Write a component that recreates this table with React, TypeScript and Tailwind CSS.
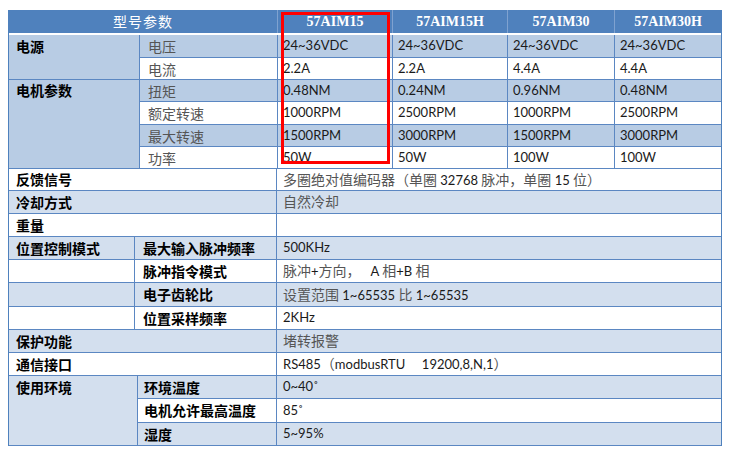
import React from "react";

const LINE = "border-[#5b87c2]";

function Mixed({ text }: { text: string }) {
  const parts = text.split(/([\u3000-\u303f\u4e00-\u9fff\uff00-\uffef]+)/);
  return (
    <span className="whitespace-pre">
      {parts.map((p, i) =>
        /[\u3000-\u303f\u4e00-\u9fff\uff00-\uffef]/.test(p) ? (
          <span key={i} className="text-[#555555] text-[14px]">
            {p}
          </span>
        ) : (
          <span key={i} className="text-[#1a1a1a]">
            {p}
          </span>
        )
      )}
    </span>
  );
}

const BLUE = "bg-[#b8cce4]";
const LIGHT = "bg-[#d3dfee]";
const WHITE = "bg-white";

type UpperRow = { label: string; vals: string[]; h: string; bg: string };

function UpperGroup({ title, rows, h }: { title: string; rows: UpperRow[]; h: string }) {
  return (
    <div className={`flex ${h}`}>
      <div className={`w-[130px] shrink-0 ${BLUE} border-b ${LINE}`}>
        <div className={`${rows[0].h} flex items-center pl-[7px] pb-px font-bold text-black text-[14px]`}>{title}</div>
      </div>
      <div className="flex flex-col flex-1">
        {rows.map((r, i) => (
          <div key={i} className={`flex ${r.h} ${r.bg} border-b ${LINE}`}>
            <div className={`w-[138px] shrink-0 border-l ${LINE} flex items-center pl-[8px]`}>
              <Mixed text={r.label} />
            </div>
            {r.vals.map((v, j) => (
              <div
                key={j}
                className={`${j < 2 ? "w-[115px]" : "w-[107px]"} shrink-0 border-l ${LINE} flex items-center pl-[5px] text-[13px]`}
              >
                <Mixed text={v} />
              </div>
            ))}
          </div>
        ))}
      </div>
    </div>
  );
}

function WideRow({ label, value, h, bg }: { label: string; value: string; h: string; bg: string }) {
  return (
    <div className={`flex ${h} ${bg} border-b ${LINE}`}>
      <div className="w-[267px] shrink-0 flex items-center pl-[7px] font-bold text-black text-[14px]">{label}</div>
      <div className={`w-[445px] shrink-0 border-l ${LINE} flex items-center pl-[6px] text-[13px]`}>
        <Mixed text={value} />
      </div>
    </div>
  );
}

function SplitRow({
  a,
  b,
  value,
  h,
  bg,
}: {
  a: string;
  b: string;
  value: string;
  h: string;
  bg: string;
}) {
  return (
    <div className={`flex ${h} ${bg} border-b ${LINE}`}>
      <div className="w-[125px] shrink-0 flex items-center pl-[7px] font-bold text-black text-[14px]">{a}</div>
      <div className={`w-[142px] shrink-0 border-l ${LINE} flex items-center pl-[8px] font-bold text-black text-[14px]`}>{b}</div>
      <div className={`w-[445px] shrink-0 border-l ${LINE} flex items-center pl-[6px] text-[13px]`}>
        <Mixed text={value} />
      </div>
    </div>
  );
}

export default function App() {
  const envRows = [
    { b: "环境温度", v: "0~40˚", h: "h-[23px]", bg: LIGHT },
    { b: "电机允许最高温度", v: "85˚", h: "h-[24px]", bg: WHITE },
    { b: "湿度", v: "5~95%", h: "h-[23px]", bg: LIGHT },
  ];
  return (
    <div
      className="w-[729px] h-[452px] bg-white pt-[10px] pl-[8px] relative overflow-hidden"
      style={{ fontFamily: "Lato, 'Noto Sans CJK SC', sans-serif" }}
    >
      <div className={`w-[714px] border-l border-r border-[#4f81bd]`}>
        {/* header */}
        <div className="flex h-[25px] bg-[#4f81bd] border-b-2 border-white text-white">
          <div className="w-[268px] shrink-0 flex items-center justify-center text-[14px] tracking-[1px]">型号参数</div>
          {["57AIM15", "57AIM15H", "57AIM30", "57AIM30H"].map((m, i) => (
            <div
              key={m}
              className={`${i < 2 ? "w-[115px]" : "w-[107px]"} shrink-0 border-l border-[#7fa2d0] flex items-center justify-center font-bold text-[14px]`}
              style={{ fontFamily: "'Liberation Serif', serif" }}
            >
              {m}
            </div>
          ))}
        </div>

        <UpperGroup
          title="电源"
          h="h-[45px]"
          rows={[
            { label: "电压", vals: ["24~36VDC", "24~36VDC", "24~36VDC", "24~36VDC"], h: "h-[23px]", bg: BLUE },
            { label: "电流", vals: ["2.2A", "2.2A", "4.4A", "4.4A"], h: "h-[22px]", bg: WHITE },
          ]}
        />
        <UpperGroup
          title="电机参数"
          h="h-[89px]"
          rows={[
            { label: "扭矩", vals: ["0.48NM", "0.24NM", "0.96NM", "0.48NM"], h: "h-[22px]", bg: BLUE },
            { label: "额定转速", vals: ["1000RPM", "2500RPM", "1000RPM", "2500RPM"], h: "h-[23px]", bg: WHITE },
            { label: "最大转速", vals: ["1500RPM", "3000RPM", "1500RPM", "3000RPM"], h: "h-[22px]", bg: BLUE },
            { label: "功率", vals: ["50W", "50W", "100W", "100W"], h: "h-[22px]", bg: WHITE },
          ]}
        />

        <WideRow label="反馈信号" value="多圈绝对值编码器（单圈 32768 脉冲，单圈 15 位）" h="h-[22px]" bg={WHITE} />
        <WideRow label="冷却方式" value="自然冷却" h="h-[23px]" bg={LIGHT} />
        <WideRow label="重量" value="" h="h-[23px]" bg={WHITE} />

        <SplitRow a="位置控制模式" b="最大输入脉冲频率" value="500KHz" h="h-[23px]" bg={LIGHT} />
        <SplitRow a="" b="脉冲指令模式" value="脉冲+方向，   A 相+B 相" h="h-[23px]" bg={WHITE} />
        <SplitRow a="" b="电子齿轮比" value="设置范围 1~65535 比 1~65535" h="h-[24px]" bg={LIGHT} />
        <SplitRow a="" b="位置采样频率" value="2KHz" h="h-[23px]" bg={WHITE} />

        <WideRow label="保护功能" value="堵转报警" h="h-[23px]" bg={LIGHT} />
        <WideRow label="通信接口" value="RS485（modbusRTU     19200,8,N,1）" h="h-[23px]" bg={WHITE} />

        <div className="flex h-[70px]">
          <div className={`w-[128px] shrink-0 ${LIGHT} border-b ${LINE}`}>
            <div className="h-[23px] flex items-center pl-[7px] font-bold text-black text-[14px]">使用环境</div>
          </div>
          <div className="flex flex-col">
            {envRows.map((r) => (
              <div key={r.b} className={`flex ${r.h} ${r.bg} border-b ${LINE}`}>
                <div className={`w-[139px] shrink-0 border-l ${LINE} flex items-center pl-[6px] font-bold text-black text-[14px]`}>
                  {r.b}
                </div>
                <div className={`w-[445px] shrink-0 border-l ${LINE} flex items-center pl-[6px] text-[13px]`}>
                  <Mixed text={r.v} />
                </div>
              </div>
            ))}
          </div>
        </div>
      </div>

      {/* red highlight box */}
      <div className="absolute left-[281px] top-[12px] w-[109px] h-[152px] border-[3px] border-[#ff0000] pointer-events-none" />
    </div>
  );
}
